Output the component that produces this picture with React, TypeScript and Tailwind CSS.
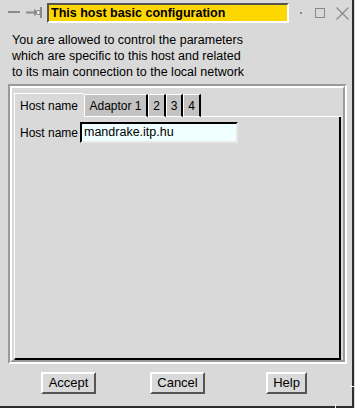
import React from "react";

export default function App() {
  return (
    <div className="w-[355px] h-[408px] bg-[#d9d9d9] font-['Liberation_Sans',Arial,sans-serif] text-[12px] text-black">
      <div className="relative w-[354px] h-[408px] border-r-2 border-b-2 border-[#2e2e2e]">
        <TitleBar />

        <div className="mt-[6px] pl-[12px] leading-[16px] text-[12.5px] text-black">
          <div>You are allowed to control the parameters</div>
          <div>which are specific to this host and related</div>
          <div>to its main connection to the local network</div>
        </div>

        {/* groove frame */}
        <div className="mt-[4px] ml-[8px] w-[339px] h-[280px] border-2 border-t-[#9a9a9a] border-l-[#9a9a9a] border-b-white border-r-white">
          <div className="w-[335px] h-[276px] border-2 border-t-white border-l-white border-b-[#9a9a9a] border-r-[#9a9a9a] pt-[3px] pl-[2px]">
            <Notebook />
          </div>
        </div>

        <div className="mt-[8px] flex items-start">
          <Button label="Accept" className="ml-[41px] w-[55px]" />
          <Button label="Cancel" className="ml-[54px] w-[55px]" />
          <Button label="Help" className="ml-[61px] w-[41px]" />
        </div>

        {/* resize corner marks */}
        <div className="absolute right-[-2px] top-[386px] w-[4px] h-[1px] bg-white" />
        <div className="absolute left-[335px] bottom-[-2px] w-[1px] h-[4px] bg-white" />
      </div>
    </div>
  );
}

function TitleBar() {
  return (
    <div className="h-[26px] flex items-start">
      <div className="ml-[8px] mt-[11px] w-[12px] h-[2px] bg-[#8a8a8a]" />
      <svg className="ml-[6px] mt-[6px]" width="17" height="13" viewBox="0 0 17 13">
        <line x1="0" y1="6.5" x2="8" y2="6.5" stroke="#8a8a8a" strokeWidth="2" />
        <path d="M8 3 L11 5 L11 8 L8 10 Z" fill="#8a8a8a" />
        <path d="M11 4.5 L14 4.5 L14 8.5 L11 8.5" fill="none" stroke="#8a8a8a" strokeWidth="1" />
        <path d="M14.5 1 L14.5 12 M15.5 1 L15.5 12" stroke="#8a8a8a" strokeWidth="1" />
        <path d="M12 5 L13 5 L13 8 L12 8 Z" fill="#fff" />
      </svg>
      <div className="ml-[4px] mt-[3px] w-[242px] h-[20px] bg-[#ffd700] border-2 border-t-[#555] border-l-[#555] border-b-white border-r-white flex items-center pl-[2px]">
        <span className="font-bold text-[12.5px] leading-none">This host basic configuration</span>
      </div>
      <div className="ml-[11px] mt-[12px] w-[2px] h-[2px] bg-[#8a8a8a]" />
      <div className="ml-[13px] mt-[8px] w-[10px] h-[10px] border border-[#8a8a8a]" />
      <svg className="ml-[11px] mt-[7px]" width="13" height="13" viewBox="0 0 13 13">
        <path d="M0.5 0.5 L12.5 12.5 M12.5 0.5 L0.5 12.5" stroke="#8a8a8a" strokeWidth="1.2" />
      </svg>
    </div>
  );
}

function Notebook() {
  const tabs = [
    { label: "Adaptor 1", w: "w-[64px]" },
    { label: "2", w: "w-[18px]" },
    { label: "3", w: "w-[17px]" },
    { label: "4", w: "w-[18px]" },
  ];
  return (
    <div className="w-[327px]">
      <div className="flex items-end h-[26px]">
        <div className="w-[70px] h-[25px] bg-[#d9d9d9] border-l border-t border-white border-r border-r-[#d9d9d9] flex items-center pl-[5px] relative z-10 -mb-[1px]">
          Host name
        </div>
        {tabs.map(t => (
          <div key={t.label} className={`${t.w} h-[23px] bg-[#c3c3c3] border-t border-l border-white border-r-2 border-r-black border-b border-b-white flex items-center justify-center`}>
            {t.label}
          </div>
        ))}
        <div className="flex-1 h-[1px] bg-white" />
      </div>
      <div className="h-[243px] border-l border-white border-r-2 border-r-black border-b-2 border-b-black pt-[5px] pl-[5px]">
        <div className="flex items-center">
          <span className="w-[60px]">Host name</span>
          <div className="w-[158px] h-[21px] bg-[#f0ffff] border-2 border-t-black border-l-black border-b-[#e8e8e8] border-r-[#e8e8e8] flex items-center pl-[2px] text-[12.5px]">
            mandrake.itp.hu
          </div>
        </div>
      </div>
    </div>
  );
}

function Button({ label, className }: { label: string; className: string }) {
  return (
    <div className={`${className} h-[22px] border-2 border-t-white border-l-white border-b-[#555] border-r-[#555] flex items-center justify-center text-[13px] text-black`}>
      {label}
    </div>
  );
}
